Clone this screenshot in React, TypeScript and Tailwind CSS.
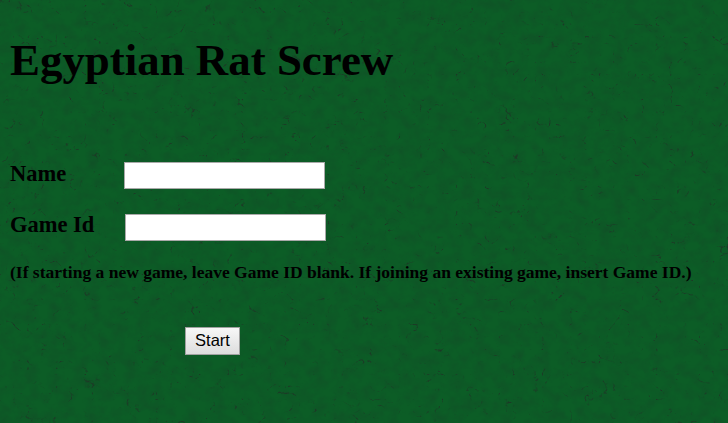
import React from "react";

function FeltTexture() {
  return (
    <svg className="absolute inset-0 h-full w-full" aria-hidden="true">
      <filter id="felt" x="0" y="0" width="100%" height="100%" colorInterpolationFilters="sRGB">
        <feTurbulence type="fractalNoise" baseFrequency="0.08 0.09" numOctaves="4" seed="8" />
        <feColorMatrix values="0 0 0 0 0.11  0 0 0 0 0.19  0 0 0 0 0.15  1.6 0.8 0 0 -0.95" />
      </filter>
      <filter id="fibers" x="0" y="0" width="100%" height="100%" colorInterpolationFilters="sRGB">
        <feTurbulence type="turbulence" baseFrequency="0.07 0.08" numOctaves="3" seed="31" result="strands" />
        <feColorMatrix in="strands" values="0 0 0 0 0.13  0 0 0 0 0.19  0 0 0 0 0.15  -10 0 0 0 1.25" result="lines" />
        <feTurbulence type="fractalNoise" baseFrequency="0.06" numOctaves="3" seed="5" />
        <feColorMatrix values="0 0 0 0 0  0 0 0 0 0  0 0 0 0 0  4.5 0 0 0 -2.15" result="patches" />
        <feComposite in="lines" in2="patches" operator="in" />
        <feGaussianBlur stdDeviation="0.4" />
      </filter>
      <rect width="100%" height="100%" filter="url(#felt)" opacity="0.22" />
      <rect width="100%" height="100%" filter="url(#fibers)" opacity="0.8" />
    </svg>
  );
}

function Field({ label, id, labelClass }: { label: string; id: string; labelClass: string }) {
  return (
    <div className="flex h-[27px]">
      <label htmlFor={id} className={`${labelClass} text-[22.5px] font-bold`}>
        {label}
      </label>
      <input id={id} className="h-[27px] w-[201px] border border-[#a9a9a9] bg-white px-1 font-['Liberation_Sans',sans-serif] text-base outline-none" />
    </div>
  );
}

export default function App() {
  return (
    <main className="relative isolate h-[423px] w-full overflow-hidden bg-[#0c5d26] font-['Liberation_Serif',serif] text-black">
      <div className="absolute inset-0 -z-10">
        <FeltTexture />
      </div>
      <form className="flex flex-col items-start pt-8 pl-2.5" onSubmit={(e) => e.preventDefault()}>
        <h1 className="text-[44.9px] leading-[56px] font-bold whitespace-nowrap">Egyptian Rat Screw</h1>
        <div className="mt-[74px] flex flex-col gap-[25px]">
          <Field label="Name" id="name" labelClass="w-[114px] leading-[23px]" />
          <Field label="Game Id" id="game-id" labelClass="w-[115px] leading-[21px]" />
        </div>
        <p className="mt-5 text-[17.5px] leading-[22px] font-bold whitespace-nowrap">
          (If starting a new game, leave Game ID blank. If joining an existing game, insert Game ID.)
        </p>
        <button className="mt-11 ml-[175px] h-7 w-[55px] border border-[#a0a0a0] bg-linear-to-b from-[#f7f7f7] to-[#dddddd] pb-0.5 font-['Liberation_Sans',sans-serif] text-[16.5px] leading-6">
          Start
        </button>
      </form>
    </main>
  );
}
